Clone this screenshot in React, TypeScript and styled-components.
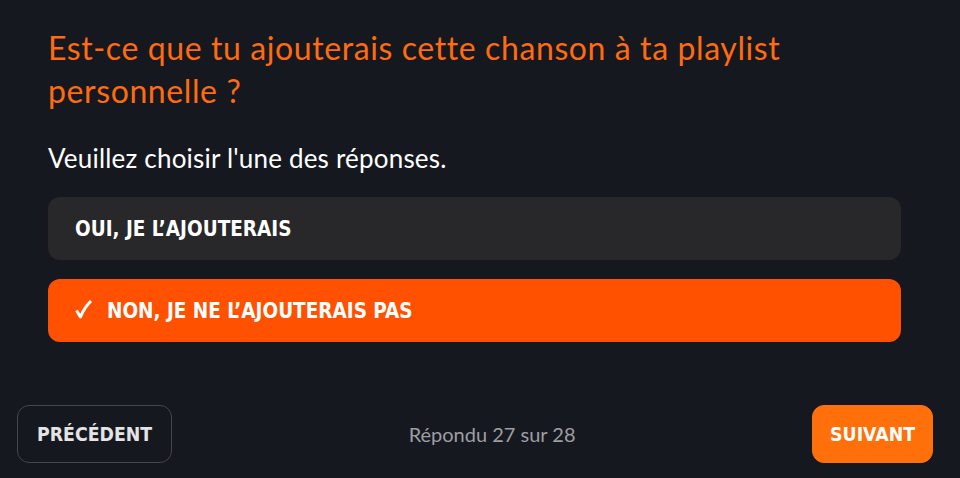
import React, { useState } from "react";
import styled, { createGlobalStyle } from "styled-components";

const GlobalStyle = createGlobalStyle`
  html, body {
    margin: 0;
    padding: 0;
    background-color: #16181f;
  }
  * {
    box-sizing: border-box;
  }
`;

const Page = styled.div`
  width: 960px;
  height: 478px;
  background-color: #16181f;
  display: flex;
  flex-direction: column;
  font-family: "Lato", "Noto Sans", sans-serif;
`;

const Content = styled.div`
  padding: 26px 59px 0 48px;
  flex: 1;
`;

const Title = styled.h1`
  margin: 0;
  font-size: 32px;
  line-height: 43px;
  font-weight: 400;
  letter-spacing: 0.6px;
  color: #ff6b0f;
`;

const Hint = styled.p`
  margin: 30px 0 23px;
  font-size: 26px;
  line-height: 32px;
  letter-spacing: 0.2px;
  color: #ffffff;
`;

const Options = styled.div`
  display: flex;
  flex-direction: column;
  gap: 19px;
`;

const Option = styled.button<{ $selected: boolean }>`
  display: flex;
  align-items: center;
  gap: 15px;
  height: 63px;
  padding: 0 27px;
  border: none;
  border-radius: 12px;
  background-color: ${(props) => (props.$selected ? "#ff5100" : "#28282a")};
  color: #ffffff;
  font-family: "DejaVu Sans Condensed", sans-serif;
  font-weight: 700;
  font-size: 20.5px;
  text-align: left;
  cursor: pointer;
`;

const CheckIcon = styled.svg`
  flex: none;
  margin-top: -2px;
`;

const Footer = styled.div`
  display: flex;
  align-items: center;
  padding: 0 27px 15px 17px;
`;

const NavButton = styled.button<{ $primary?: boolean }>`
  height: 58px;
  padding: 0 ${(props) => (props.$primary ? "17px" : "19px")};
  border-radius: 12px;
  border: 1px solid ${(props) => (props.$primary ? "#ff6f0a" : "#45464b")};
  background-color: ${(props) => (props.$primary ? "#ff6f0a" : "transparent")};
  color: ${(props) => (props.$primary ? "#ffffff" : "#e4e4e6")};
  font-family: "DejaVu Sans Condensed", sans-serif;
  font-weight: 700;
  font-size: 19.3px;
  cursor: pointer;
`;

const Progress = styled.div`
  flex: 1;
  text-align: center;
  font-size: 20px;
  color: #9d9ea3;
`;

const Check = () => (
  <CheckIcon width="17" height="19" viewBox="0 0 17 19">
    <path
      d="M1.5 10.5 L5.5 17 Q9 8 16 1"
      fill="none"
      stroke="#ffffff"
      strokeWidth="3"
      strokeLinejoin="round"
    />
  </CheckIcon>
);

const answers = ["OUI, JE L’AJOUTERAIS", "NON, JE NE L’AJOUTERAIS PAS"];

export default function App() {
  const [selected, setSelected] = useState(1);
  return (
    <>
      <GlobalStyle />
      <Page>
        <Content>
          <Title>Est-ce que tu ajouterais cette chanson à ta playlist personnelle ?</Title>
          <Hint>Veuillez choisir l'une des réponses.</Hint>
          <Options>
            {answers.map((answer, i) => (
              <Option key={answer} $selected={selected === i} onClick={() => setSelected(i)}>
                {selected === i && <Check />}
                {answer}
              </Option>
            ))}
          </Options>
        </Content>
        <Footer>
          <NavButton>PRÉCÉDENT</NavButton>
          <Progress>Répondu 27 sur 28</Progress>
          <NavButton $primary>SUIVANT</NavButton>
        </Footer>
      </Page>
    </>
  );
}
